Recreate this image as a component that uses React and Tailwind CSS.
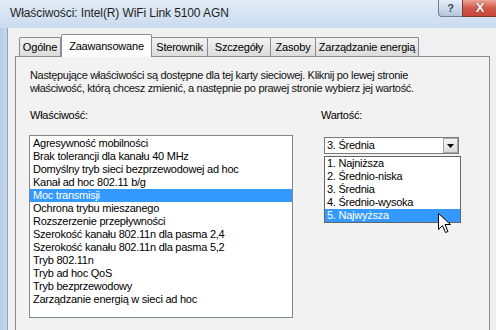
const props = [
  "Agresywność mobilności",
  "Brak tolerancji dla kanału 40 MHz",
  "Domyślny tryb sieci bezprzewodowej ad hoc",
  "Kanał ad hoc 802.11 b/g",
  "Moc transmisji",
  "Ochrona trybu mieszanego",
  "Rozszerzenie przepływności",
  "Szerokość kanału 802.11n dla pasma 2,4",
  "Szerokość kanału 802.11n dla pasma 5,2",
  "Tryb 802.11n",
  "Tryb ad hoc QoS",
  "Tryb bezprzewodowy",
  "Zarządzanie energią w sieci ad hoc",
];

const values = [
  "1. Najniższa",
  "2. Średnio-niska",
  "3. Średnia",
  "4. Średnio-wysoka",
  "5. Najwyższa",
];

const tabs = [
  { label: "Ogólne", w: "w-[42px]" },
  { label: "Zaawansowane", w: "w-[91px]", active: true },
  { label: "Sterownik", w: "w-[57px]" },
  { label: "Szczegóły", w: "w-[64px]" },
  { label: "Zasoby", w: "w-[46px]" },
  { label: "Zarządzanie energią", w: "w-[104px]" },
];

const Cursor = () => (
  <svg width="13" height="21" viewBox="0 0 13 21" className="absolute left-[438px] top-[213px]">
    <path d="M0.5 0.5 L0.5 16.5 L4.5 12.5 L7.5 19.5 L10 18.5 L7 11.5 L12.5 11.5 Z" fill="#fff" stroke="#000" strokeWidth="1" strokeLinejoin="round" />
  </svg>
);

export default function App() {
  return (
    <div className="relative w-[496px] h-[330px] overflow-hidden bg-[#f0f0f0] text-[#000] font-['Liberation_Sans',Arial,sans-serif]">
      {/* title bar */}
      <div className="h-[28px] flex items-center pl-[10px] pb-[2px] bg-gradient-to-b from-[#e3ecf7] to-[#c9dbef] text-[12px] tracking-[-0.1px] text-[#1e1e1e]">
        Właściwości: Intel(R) WiFi Link 5100 AGN
      </div>
      <div className="absolute top-0 left-[438px] w-[25px] h-[17px] rounded-bl-[4px] border border-t-0 border-[#6d7f96] bg-gradient-to-b from-[#e6eef8] to-[#b4c6dc] flex items-center justify-center text-[11px] font-bold text-[#3a4a5e]">
        ?
      </div>
      <div className="absolute top-0 left-[462px] w-[40px] h-[17px] border border-t-0 border-[#7a3a32] bg-gradient-to-b from-[#e8a596] via-[#d0584a] to-[#c8463b] flex items-center justify-center">
        <span className="text-white font-bold text-[13px] [text-shadow:0_0_1px_#5a1a10] -mt-[1px] -ml-[4px]">X</span>
      </div>

      <div className="flex h-[302px]">
        {/* left window frame */}
        <div className="w-[8px] bg-gradient-to-r from-[#b6cce6] to-[#c8d9ec] border-r border-[#8fa4bc]" />
        <div className="flex-1 pl-[7px] pr-[6px]">
          {/* tabs */}
          <div className="flex items-end h-[28px] pl-[4px] relative z-10 tracking-[-0.2px]">
            {tabs.map((t) =>
              t.active ? (
                <div
                  key={t.label}
                  className={`${t.w} h-[23px] -mb-[1px] bg-[#fcfcfc] border border-b-0 border-[#898c95] rounded-t-[2px] flex justify-center pt-[3px] text-[11px]`}
                >
                  {t.label}
                </div>
              ) : (
                <div
                  key={t.label}
                  className={`${t.w} h-[19px] bg-gradient-to-b from-[#f3f3f3] to-[#dcdcdc] border border-b-0 border-[#898c95] -ml-px first:ml-0 rounded-t-[2px] flex items-center justify-center text-[11px]`}
                >
                  {t.label}
                </div>
              )
            )}
          </div>

          {/* panel */}
          <div className="h-[280px] border border-[#898c95] bg-[#f2f2f2] pl-[14px] pt-[12px] tracking-[-0.25px]">
            <p className="text-[11px] leading-[13px] text-[#111] tracking-[-0.33px]">
              Następujące właściwości są dostępne dla tej karty sieciowej. Kliknij po lewej stronie
              <br />
              właściwość, którą chcesz zmienić, a następnie po prawej stronie wybierz jej wartość.
            </p>

            <div className="flex mt-[14px]">
              <div className="w-[291px]">
                <div className="text-[11px] leading-[13px]">Właściwość:</div>
                <div className="mt-[13px] -ml-px w-[264px] h-[183px] border border-[#828790] bg-white pt-[1px] text-[11px] leading-[13px]">
                  {props.map((p) => (
                    <div
                      key={p}
                      className={p === "Moc transmisji" ? "bg-[#3399ff] text-white pl-[3px]" : "pl-[3px]"}
                    >
                      {p}
                    </div>
                  ))}
                </div>
              </div>

              <div>
                <div className="text-[11px] leading-[13px]">Wartość:</div>
                <div className="mt-[15px] ml-[3px] w-[135px] h-[17px] border border-[#7a7a7a] bg-white flex items-center text-[11px]">
                  <span className="flex-1 pl-[2px]">3. Średnia</span>
                  <div className="w-[15px] h-[15px] border border-[#a8a8a8] bg-gradient-to-b from-[#f4f4f4] to-[#dcdcdc] flex items-center justify-center">
                    <svg width="7" height="4" viewBox="0 0 7 4">
                      <path d="M0 0 H7 L3.5 4 Z" fill="#000" />
                    </svg>
                  </div>
                </div>
                <div className="mt-[2px] ml-[3px] w-[137px] border border-[#646464] bg-white text-[11px] leading-[13px]">
                  {values.map((v) => (
                    <div
                      key={v}
                      className={v === "5. Najwyższa" ? "bg-[#3399ff] text-white pl-[2px]" : "pl-[2px]"}
                    >
                      {v}
                    </div>
                  ))}
                </div>
              </div>
            </div>
          </div>
        </div>
      </div>

      <Cursor />
    </div>
  );
}
